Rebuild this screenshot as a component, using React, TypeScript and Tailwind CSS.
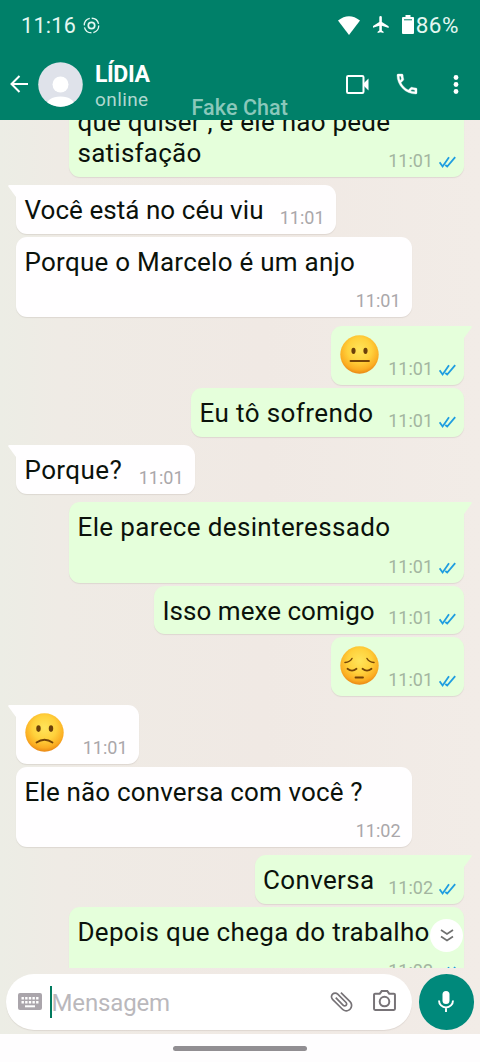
import React from "react";
import clsx from "clsx";

type Mood = "neutral" | "pensive" | "sad";

type Message = {
  id: number;
  from: "me" | "her";
  text?: string;
  mood?: Mood;
  time: string;
  tail?: boolean;
  // bubble size, top gap and letter spacing
  box: string;
  tracking?: string;
};

const messages: Message[] = [
  { id: 1, from: "me", text: "que quiser , e ele não pede\nsatisfação", time: "11:01", box: "-mt-[23px] h-[80px] w-[395px]", tracking: "tracking-[0.25px]" },
  { id: 2, from: "her", text: "Você está no céu viu", time: "11:01", tail: true, box: "mt-[8px] h-[49px] w-[320px]", tracking: "tracking-[0.05px]" },
  { id: 3, from: "her", text: "Porque o Marcelo é um anjo", time: "11:01", box: "mt-[2.5px] h-[80.5px] w-[396px]", tracking: "tracking-[0.25px]" },
  { id: 4, from: "me", mood: "neutral", time: "11:01", tail: true, box: "mt-[9px] h-[59px] w-[133.5px]" },
  { id: 5, from: "me", text: "Eu tô sofrendo", time: "11:01", box: "mt-[3px] h-[48.5px] w-[273px]", tracking: "tracking-[0.4px]" },
  { id: 6, from: "her", text: "Porque?", time: "11:01", tail: true, box: "mt-[8.5px] h-[49px] w-[179px]", tracking: "tracking-[0.4px]" },
  { id: 7, from: "me", text: "Ele parece desinteressado", time: "11:01", tail: true, box: "mt-[8px] h-[80.5px] w-[395px]", tracking: "tracking-[0.36px]" },
  { id: 8, from: "me", text: "Isso mexe comigo", time: "11:01", box: "mt-[3px] h-[48.5px] w-[310px]", tracking: "tracking-[0.03px]" },
  { id: 9, from: "me", mood: "pensive", time: "11:01", box: "mt-[3px] h-[59px] w-[133.5px]" },
  { id: 10, from: "her", mood: "sad", time: "11:01", tail: true, box: "mt-[8.5px] h-[59px] w-[123px]" },
  { id: 11, from: "her", text: "Ele não conversa com você ?", time: "11:02", box: "mt-[3px] h-[80.5px] w-[396px]", tracking: "tracking-[0.16px]" },
  { id: 12, from: "me", text: "Conversa", time: "11:02", tail: true, box: "mt-[8px] h-[49px] w-[209.5px]", tracking: "tracking-[0.35px]" },
  { id: 13, from: "me", text: "Depois que chega do trabalho", time: "11:02", box: "mt-[3px] h-[80px] w-[395px]", tracking: "tracking-[0.3px]" },
];

const faces: Record<Mood, React.ReactNode> = {
  neutral: (
    <>
      <ellipse cx="13.5" cy="15.8" rx="2.1" ry="3.1" fill="#6b3f0a" stroke="none" />
      <ellipse cx="25.5" cy="15.8" rx="2.1" ry="3.1" fill="#6b3f0a" stroke="none" />
      <path d="M10.5 26h18.5" />
    </>
  ),
  pensive: (
    <>
      <path d="M5 16.5q5-.5 7-4M27 12.5q2 3.5 7 4" strokeWidth="1.5" />
      <path d="M7.5 22.800q4.500 3.700 9 0M22.500 22.800q4.500 3.700 9 0M15.500 31.500h7.500" />
    </>
  ),
  sad: (
    <>
      <ellipse cx="13.5" cy="15.6" rx="2.2" ry="3.3" fill="#6b3f0a" stroke="none" />
      <ellipse cx="26" cy="15.6" rx="2.2" ry="3.3" fill="#6b3f0a" stroke="none" />
      <path d="M11.500 29.500q8-5.500 16 0" />
    </>
  ),
};

const Emoji = ({ mood }: { mood: Mood }) => (
  <svg viewBox="0 0 39 39" className="mt-[8.5px] h-[39px] w-[39px]" fill="none" stroke="#754407" strokeWidth="1.8" strokeLinecap="round">
    <defs>
      <radialGradient id={`face-${mood}`} cx=".5" cy=".38" r=".63">
        <stop offset="0" stopColor="#ffe45a" />
        <stop offset=".5" stopColor="#ffd13c" />
        <stop offset=".82" stopColor="#fbad22" />
        <stop offset="1" stopColor="#e88413" />
      </radialGradient>
    </defs>
    <circle cx="19.5" cy="19.5" r="19.2" fill={`url(#face-${mood})`} stroke="none" />
    {faces[mood]}
  </svg>
);

const Ticks = () => (
  <svg viewBox="0 0 17 12" className="mb-[3px] ml-[6px] h-[12px] w-[17px]" fill="none" stroke="#1f9de0" strokeWidth="1.8">
    <path d="M.6 6.2 3.600 10.400 10 1.200M6.300 9 8.200 10.500 16.200 1.200" />
  </svg>
);

const Bubble = ({ from, text, mood, time, tail, box, tracking }: Message) => {
  const mine = from === "me";
  return (
    <div
      className={clsx(
        "relative flex shrink-0 justify-between rounded-[11px] pb-[6px] shadow-[0_1px_1px_rgba(120,110,100,0.15)]",
        mine ? "self-end bg-[#e5ffdb] pl-[8.5px] pr-[8px]" : "self-start bg-[#fffeff] pl-[8.5px] pr-[11.500px]",
        tail && (mine ? "rounded-tr-none" : "rounded-tl-none"),
        box
      )}
    >
      {tail && (
        <svg
          viewBox="0 0 8 13"
          className={clsx("absolute top-0 h-[13px] w-[8px]", mine ? "left-full" : "right-full -scale-x-100")}
          fill={mine ? "#e5ffdb" : "#fffeff"}
        >
          <path d="M0 0h6.500q2 0 1 1.800L0 12z" />
        </svg>
      )}
      {mood ? (
        <div className="pl-[0.5px]">
          <Emoji mood={mood} />
        </div>
      ) : (
        <p className={clsx("w-0 whitespace-pre pt-[10px] text-[26px] leading-[31px] text-[#0b120b]", tracking)}>{text}</p>
      )}
      <div className="flex items-end self-end">
        <span className={clsx("text-[18px] leading-[20px]", mine ? "text-[#a3b5a0]" : "text-[#aaa7aa]")}>{time}</span>
        {mine && <Ticks />}
      </div>
    </div>
  );
};

const StatusBar = () => (
  <div className="flex h-[50px] items-center pl-[21px] pr-[21px] text-[#e4f7f1]">
    <span className="pt-[2px] text-[21.5px] leading-none tracking-[0.3px]">11:16</span>
    <svg viewBox="0 0 18 18" className="ml-[7px] h-[17px] w-[17px]" fill="none" stroke="currentColor">
      <circle cx="9" cy="9" r="7.7" strokeWidth="1.4" strokeDasharray="10 2.09" />
      <circle cx="9" cy="9" r="3.4" strokeWidth="1.8" />
    </svg>
    <svg viewBox="0 0 22 19" className="ml-auto h-[19px] w-[22px]" fill="#fff">
      <path d="M0 4.500Q11-4 22 4.500L11 19z" />
    </svg>
    <svg viewBox="3 2 18 20" className="mb-[2px] ml-[13px] h-[17px] w-[16px]" fill="#fff">
      <path d="M21 16v-2l-8-5V3.500a1.500 1.500 0 0 0-3 0V9l-8 5v2l8-2.500V19l-2 1.500V22l3.500-1 3.500 1v-1.500L13 19v-5.500z" />
    </svg>
    <svg viewBox="0 0 12 19" className="mb-[2px] ml-[13px] h-[19px] w-[12px]">
      <path d="M3.500 0h5v2H11a1 1 0 0 1 1 1v15a1 1 0 0 1-1 1H1a1 1 0 0 1-1-1V3a1 1 0 0 1 1-1h2.500z" fill="#fff" />
      <path d="M2 4.800h8" stroke="#008069" strokeWidth="1" />
    </svg>
    <span className="ml-[2px] pt-[1px] text-[22.5px] leading-none tracking-[0.5px]">86%</span>
  </div>
);

const ChatHeader = () => (
  <div className="flex h-[68px] items-center pl-[10px] text-white">
    <svg viewBox="0 0 18 18" className="h-[18px] w-[18px]" fill="none" stroke="currentColor" strokeWidth="2">
      <path d="M18 9H2M9.500 1 1.500 9l8 8" />
    </svg>
    <svg viewBox="0 0 45 45" className="ml-[10px] h-[45px] w-[45px]">
      <defs>
        <clipPath id="avatar">
          <circle cx="22.5" cy="22.5" r="22.3" />
        </clipPath>
      </defs>
      <g clipPath="url(#avatar)">
        <rect width="45" height="45" fill="#dfe2ea" />
        <circle cx="22.5" cy="22.5" r="8" fill="#fff" />
        <path d="M8 45Q9 34.500 22.500 34.500T37 45z" fill="#fff" />
      </g>
    </svg>
    <div className="ml-[12px] mt-[5px]">
      <p className="text-[23px] font-bold leading-[26px] tracking-[-0.4px]">LÍDIA</p>
      <p className="text-[19px] leading-[24px] tracking-[0.4px] text-[#afd8cf]">online</p>
    </div>
    <svg viewBox="0 0 23 19" className="ml-auto h-[19px] w-[23px]" fill="none" stroke="currentColor" strokeWidth="2">
      <rect x="1" y="1" width="16.5" height="17" rx="1.2" />
      <path d="M17.500 8.500 22.500 3.500v12L17.500 10.500z" fill="currentColor" stroke="none" />
    </svg>
    <svg viewBox="3 3 18 18" className="ml-[28px] h-[20px] w-[20px] overflow-visible" fill="currentColor" stroke="currentColor" strokeWidth=".3">
      <path d="M6.540 5c.06.89.21 1.760.45 2.590l-1.200 1.200c-.41-1.200-.67-2.470-.76-3.790h1.510m9.860 12.020c.85.24 1.720.39 2.600.45v1.490c-1.320-.09-2.590-.35-3.800-.75l1.200-1.190M7.500 3H4c-.55 0-1 .45-1 1 0 9.390 7.610 17 17 17 .55 0 1-.45 1-1v-3.490c0-.55-.45-1-1-1-1.240 0-2.450-.2-3.570-.57-.1-.04-.21-.05-.31-.05-.26 0-.51.1-.71.29l-2.200 2.200c-2.830-1.450-5.150-3.760-6.590-6.590l2.200-2.200c.28-.28.36-.67.25-1.020C8.700 6.450 8.500 5.250 8.500 4c0-.55-.45-1-1-1z" />
    </svg>
    <svg viewBox="0 0 6 19" className="ml-[36px] mr-[21.5px] h-[19px] w-[6px]" fill="currentColor">
      <circle cx="3" cy="2.5" r="2.4" />
      <circle cx="3" cy="9.5" r="2.4" />
      <circle cx="3" cy="16.5" r="2.4" />
    </svg>
  </div>
);

const Composer = () => (
  <div className="flex h-[66px] shrink-0 items-start pl-[6px] pr-[6px] pt-[6px]">
    <div className="flex h-[55.5px] w-[406px] items-center rounded-full bg-white shadow-[0_1px_1px_rgba(120,110,100,0.15)]">
      <svg viewBox="0 0 24 17" className="ml-[12px] h-[17px] w-[24px]">
        <rect width="24" height="17" rx="2" fill="#aaa5ab" />
        <path d="M3.500 5.200h17M3.500 9.200h17" stroke="#fff" strokeWidth="2.6" strokeDasharray="2.4 1.25" />
        <path d="M7 13.300h10" stroke="#fff" strokeWidth="2" />
      </svg>
      <span className="ml-[7.5px] h-[32px] w-[2px] bg-[#007a5e]" />
      <span className="pt-[2px] text-[24px] leading-[30px] tracking-[-0.15px] text-[#bab8bc]">Mensagem</span>
      <svg viewBox="0 0 24 24" className="ml-auto h-[27px] w-[27px] -rotate-45" fill="#777377">
        <path d="M16.500 6v11.500c0 2.210-1.790 4-4 4s-4-1.790-4-4V5c0-1.380 1.120-2.500 2.500-2.500s2.500 1.120 2.500 2.500v10.500c0 .55-.45 1-1 1s-1-.45-1-1V6H10v9.500c0 1.380 1.120 2.500 2.500 2.500s2.500-1.120 2.500-2.500V5c0-2.210-1.790-4-4-4S7 2.790 7 5v12.500c0 3.040 2.460 5.500 5.500 5.500s5.500-2.460 5.500-5.500V6h-1.500z" />
      </svg>
      <svg viewBox="0 0 22 20" className="mb-[2px] ml-[18px] mr-[16.5px] h-[21px] w-[23px]" fill="none" stroke="#777377" strokeWidth="1.9">
        <path d="M2 3.500h4.500L8.300 1h5.400l1.800 2.500H20a1 1 0 0 1 1 1V18a1 1 0 0 1-1 1H2a1 1 0 0 1-1-1V4.500a1 1 0 0 1 1-1z" />
        <circle cx="11" cy="11" r="4.600" />
      </svg>
    </div>
    <div className="ml-auto flex h-[55.5px] w-[55.5px] items-center justify-center rounded-full bg-[#00897b]">
      <svg viewBox="0 0 16 21" className="h-[21px] w-[16px]" fill="none" stroke="#fff" strokeWidth="1.9">
        <rect x="4.5" y="0" width="7" height="13" rx="3.5" fill="#fff" stroke="none" />
        <path d="M1 9.500a7 7 0 0 0 14 0M8 16.500V21" />
      </svg>
    </div>
  </div>
);

export default function App() {
  return (
    <div className="flex h-[1062px] w-[480px] flex-col overflow-hidden bg-[#f0ebe5] bg-[linear-gradient(90deg,#ecede5_0%,#efebe5_12%,#f0e9e4_55%,#f2ece7_100%)] font-['Roboto','Noto_Sans',sans-serif]">
      <header className="relative h-[120px] shrink-0 bg-[#008069]">
        <StatusBar />
        <ChatHeader />
        <span className="absolute left-[191.5px] top-[97px] whitespace-nowrap text-[21.5px] font-medium leading-none tracking-[0.1px] text-[#8ac8bb]">
          Fake Chat
        </span>
      </header>

      <main className="relative flex h-[848px] shrink-0 flex-col overflow-hidden pl-[16px] pr-[16px]">
        {messages.map((message) => (
          <Bubble key={message.id} {...message} />
        ))}
        <button className="absolute bottom-[16px] right-[17px] flex h-[33px] w-[33px] items-center justify-center rounded-full bg-white">
          <svg viewBox="0 0 14 13" className="h-[13px] w-[14px]" fill="none" stroke="#6f706f" strokeWidth="1.7">
            <path d="m1 1 6 4 6-4M1 7.500l6 4 6-4" />
          </svg>
        </button>
      </main>

      <Composer />
      <div className="flex grow justify-center bg-[#fefdfe] pt-[12px]">
        <div className="h-[5px] w-[134px] rounded-full bg-[#918e92]" />
      </div>
    </div>
  );
}
